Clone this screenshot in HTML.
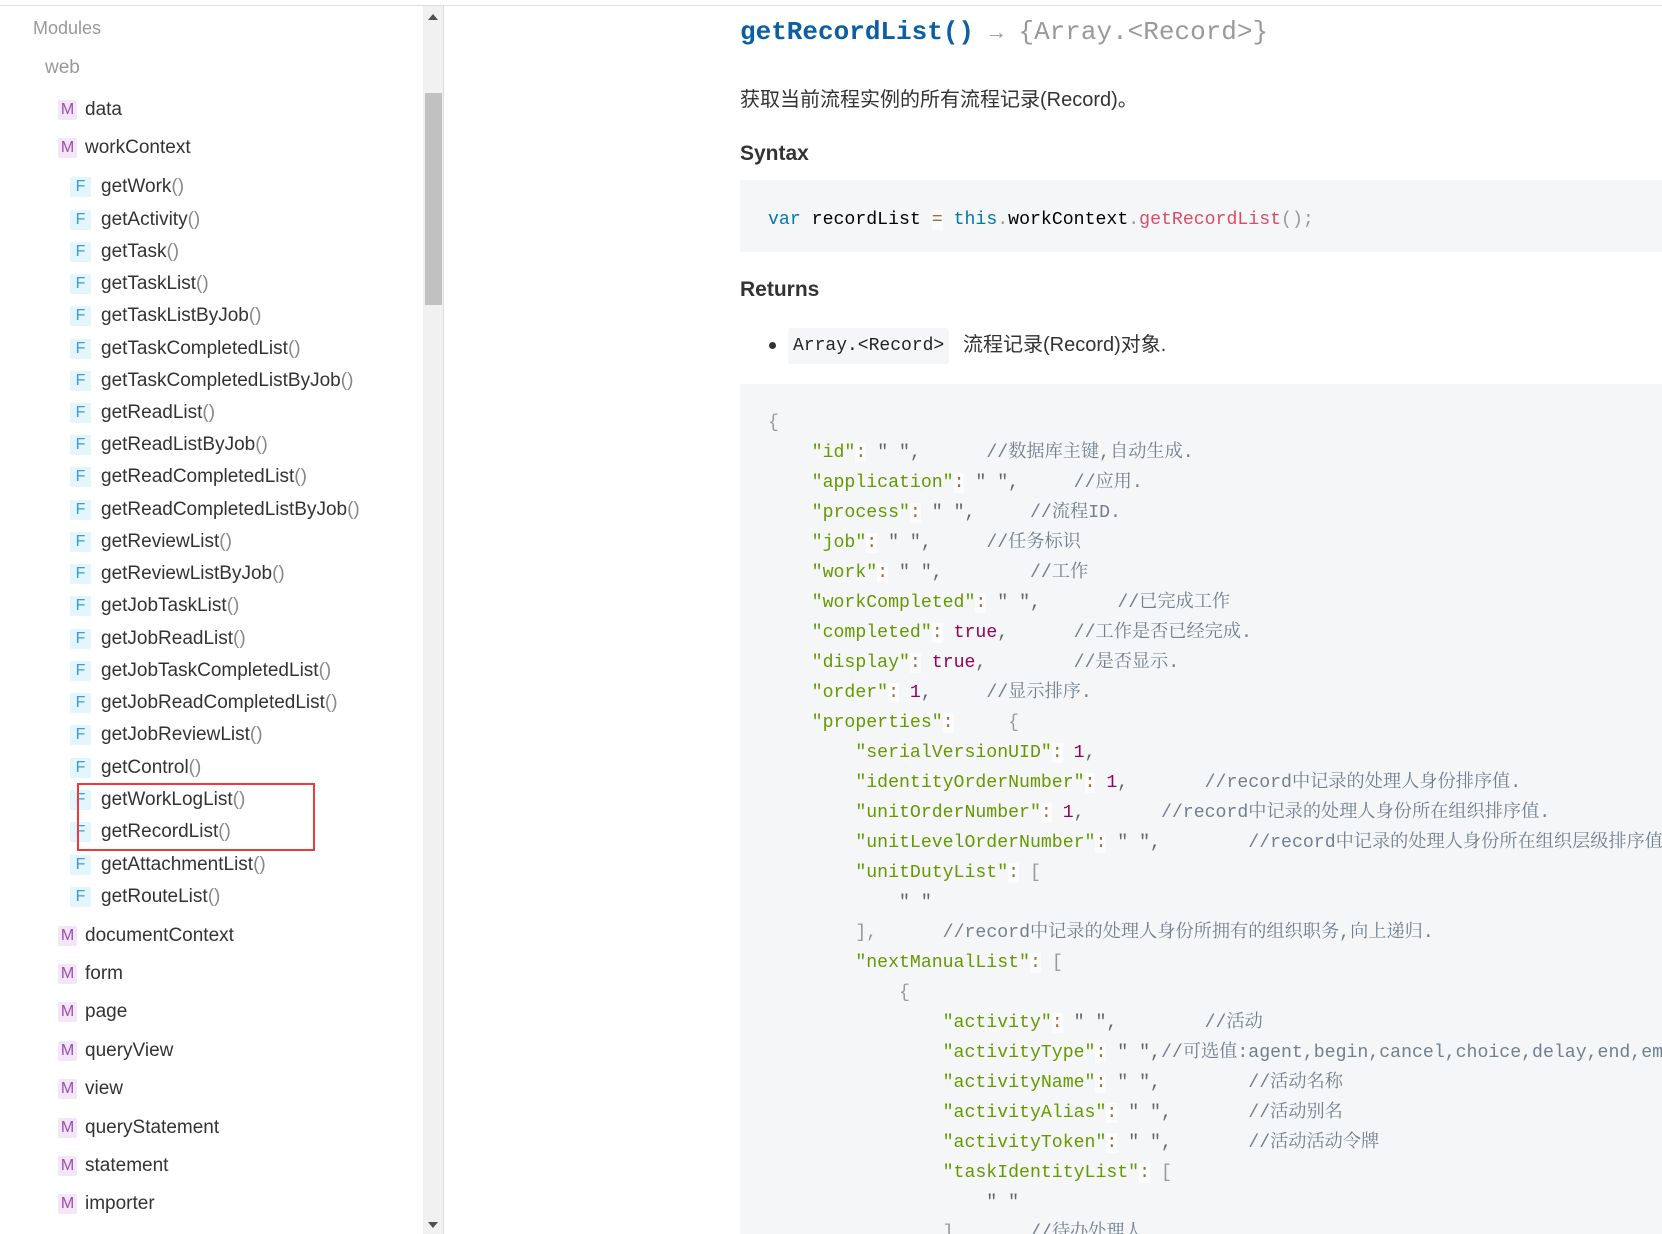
<!DOCTYPE html>
<html><head><meta charset="utf-8">
<style>
*{margin:0;padding:0;box-sizing:border-box}
html,body{width:1662px;height:1234px;overflow:hidden;background:#fff;font-family:"Liberation Sans","Noto Sans CJK SC",sans-serif}
.topline{position:absolute;left:0;top:5px;width:1662px;height:1px;background:#ddd}
.side{position:absolute;left:0;top:8px;width:444px;height:1226px}
.it{position:absolute;height:30px;line-height:30px;font-size:19px;color:#333;white-space:nowrap}
.it .ic{display:inline-block;width:19px;height:20px;line-height:20px;text-align:center;font-size:16px;border-radius:2px;margin-right:8px;vertical-align:1px}
.m .ic{background:#f3e7f7;color:#9b4bb5}
.f .ic{background:#e3f5fd;color:#3d9ccf;width:21px;margin-right:10px}
.it .p{color:#888}
.sb{position:absolute;left:423px;top:6px;width:21px;height:1228px;background:#f1f1f1;border-right:1px solid #ddd}
.thumb{position:absolute;left:425px;top:93px;width:17px;height:212px;background:#c1c1c1}
.red{position:absolute;left:77px;top:783px;width:238px;height:68px;border:2px solid #f03a3a}
.c{position:absolute;left:740px;white-space:nowrap}
.mono{font-family:"Liberation Mono","Noto Sans CJK SC",monospace}
pre{font-family:"Liberation Mono","Noto Serif CJK SC",monospace;font-size:18.2px;line-height:30px;color:#000}
.k{color:#0077aa}.fn{color:#dd4a68}.pu{color:#999}.s{color:#669900}.v{color:#666}.b{color:#990055}.cm{color:#708090}.op{color:#9a6e3a;background:rgba(255,255,255,.7)}
.cma{color:#666}
</style></head><body>
<div class="topline"></div>
<div class="side">
<div class="it" style="left:33px;top:5px;color:#999;font-size:18px">Modules</div>
<div class="it" style="left:45px;top:45px;color:#999">web</div>
<div class="it m" style="left:58px;top:87px"><span class="ic">M</span>data</div>
<div class="it m" style="left:58px;top:125px"><span class="ic">M</span>workContext</div>
<div class="it f" style="left:70px;top:164px"><span class="ic">F</span>getWork<span class="p">()</span></div>
<div class="it f" style="left:70px;top:197px"><span class="ic">F</span>getActivity<span class="p">()</span></div>
<div class="it f" style="left:70px;top:229px"><span class="ic">F</span>getTask<span class="p">()</span></div>
<div class="it f" style="left:70px;top:261px"><span class="ic">F</span>getTaskList<span class="p">()</span></div>
<div class="it f" style="left:70px;top:293px"><span class="ic">F</span>getTaskListByJob<span class="p">()</span></div>
<div class="it f" style="left:70px;top:326px"><span class="ic">F</span>getTaskCompletedList<span class="p">()</span></div>
<div class="it f" style="left:70px;top:358px"><span class="ic">F</span>getTaskCompletedListByJob<span class="p">()</span></div>
<div class="it f" style="left:70px;top:390px"><span class="ic">F</span>getReadList<span class="p">()</span></div>
<div class="it f" style="left:70px;top:422px"><span class="ic">F</span>getReadListByJob<span class="p">()</span></div>
<div class="it f" style="left:70px;top:454px"><span class="ic">F</span>getReadCompletedList<span class="p">()</span></div>
<div class="it f" style="left:70px;top:487px"><span class="ic">F</span>getReadCompletedListByJob<span class="p">()</span></div>
<div class="it f" style="left:70px;top:519px"><span class="ic">F</span>getReviewList<span class="p">()</span></div>
<div class="it f" style="left:70px;top:551px"><span class="ic">F</span>getReviewListByJob<span class="p">()</span></div>
<div class="it f" style="left:70px;top:583px"><span class="ic">F</span>getJobTaskList<span class="p">()</span></div>
<div class="it f" style="left:70px;top:616px"><span class="ic">F</span>getJobReadList<span class="p">()</span></div>
<div class="it f" style="left:70px;top:648px"><span class="ic">F</span>getJobTaskCompletedList<span class="p">()</span></div>
<div class="it f" style="left:70px;top:680px"><span class="ic">F</span>getJobReadCompletedList<span class="p">()</span></div>
<div class="it f" style="left:70px;top:712px"><span class="ic">F</span>getJobReviewList<span class="p">()</span></div>
<div class="it f" style="left:70px;top:745px"><span class="ic">F</span>getControl<span class="p">()</span></div>
<div class="it f" style="left:70px;top:777px"><span class="ic">F</span>getWorkLogList<span class="p">()</span></div>
<div class="it f" style="left:70px;top:809px"><span class="ic">F</span>getRecordList<span class="p">()</span></div>
<div class="it f" style="left:70px;top:842px"><span class="ic">F</span>getAttachmentList<span class="p">()</span></div>
<div class="it f" style="left:70px;top:874px"><span class="ic">F</span>getRouteList<span class="p">()</span></div>
<div class="it m" style="left:58px;top:913px"><span class="ic">M</span>documentContext</div>
<div class="it m" style="left:58px;top:951px"><span class="ic">M</span>form</div>
<div class="it m" style="left:58px;top:989px"><span class="ic">M</span>page</div>
<div class="it m" style="left:58px;top:1028px"><span class="ic">M</span>queryView</div>
<div class="it m" style="left:58px;top:1066px"><span class="ic">M</span>view</div>
<div class="it m" style="left:58px;top:1105px"><span class="ic">M</span>queryStatement</div>
<div class="it m" style="left:58px;top:1143px"><span class="ic">M</span>statement</div>
<div class="it m" style="left:58px;top:1181px"><span class="ic">M</span>importer</div>
</div>
<div class="red"></div>
<div class="sb"></div>
<div class="thumb"></div>
<div style="position:absolute;left:428px;top:14px;width:0;height:0;border-left:5px solid transparent;border-right:5px solid transparent;border-bottom:6px solid #505050"></div>
<div style="position:absolute;left:428px;top:1222px;width:0;height:0;border-left:5px solid transparent;border-right:5px solid transparent;border-top:6px solid #505050"></div>

<div class="c mono" style="top:12px;font-size:26px;line-height:40px"><b style="color:#0b5fa5">getRecordList()</b> <span style="color:#999;font-size:22px">→</span> <span style="color:#999">{Array.&lt;Record&gt;}</span></div>
<div class="c" style="top:86px;font-size:20px;line-height:28px;color:#333">获取当前流程实例的所有流程记录(Record)。</div>
<div class="c" style="top:140px;font-size:21px;line-height:28px;color:#333;font-weight:bold">Syntax</div>
<div class="c" style="top:180px;width:922px;height:72px;background:#f5f6f8"><pre style="padding:25px 0 0 28px"><span class="k">var</span> recordList <span class="op">=</span> <span class="k">this</span><span class="pu">.</span>workContext<span class="pu">.</span><span class="fn">getRecordList</span><span class="pu">();</span></pre></div>
<div class="c" style="top:276px;font-size:21px;line-height:28px;color:#333;font-weight:bold">Returns</div>
<div style="position:absolute;left:769px;top:342px;width:7px;height:7px;border-radius:50%;background:#333"></div>
<div class="mono" style="position:absolute;left:788px;top:328px;height:36px;line-height:36px;padding:0 5px;background:#f5f6f8;font-size:18px;color:#222;border-radius:3px">Array.&lt;Record&gt;</div>
<div style="position:absolute;left:963px;top:331px;font-size:20px;line-height:28px;color:#333">流程记录(Record)对象.</div>

<div class="c" style="top:384px;width:922px;height:850px;background:#f5f6f8;overflow:hidden"><pre style="padding:24px 0 0 28px"><span class="pu">{</span>
    <span class="s">"id"</span><span class="op">:</span> <span class="v">" "</span><span class="cma">,</span>      <span class="cm">//数据库主键,自动生成.</span>
    <span class="s">"application"</span><span class="op">:</span> <span class="v">" "</span><span class="cma">,</span>     <span class="cm">//应用.</span>
    <span class="s">"process"</span><span class="op">:</span> <span class="v">" "</span><span class="cma">,</span>     <span class="cm">//流程ID.</span>
    <span class="s">"job"</span><span class="op">:</span> <span class="v">" "</span><span class="cma">,</span>     <span class="cm">//任务标识</span>
    <span class="s">"work"</span><span class="op">:</span> <span class="v">" "</span><span class="cma">,</span>        <span class="cm">//工作</span>
    <span class="s">"workCompleted"</span><span class="op">:</span> <span class="v">" "</span><span class="cma">,</span>       <span class="cm">//已完成工作</span>
    <span class="s">"completed"</span><span class="op">:</span> <span class="b">true</span><span class="cma">,</span>      <span class="cm">//工作是否已经完成.</span>
    <span class="s">"display"</span><span class="op">:</span> <span class="b">true</span><span class="cma">,</span>        <span class="cm">//是否显示.</span>
    <span class="s">"order"</span><span class="op">:</span> <span class="b">1</span><span class="cma">,</span>     <span class="cm">//显示排序.</span>
    <span class="s">"properties"</span><span class="op">:</span>     <span class="pu">{</span>
        <span class="s">"serialVersionUID"</span><span class="op">:</span> <span class="b">1</span><span class="cma">,</span>
        <span class="s">"identityOrderNumber"</span><span class="op">:</span> <span class="b">1</span><span class="cma">,</span>       <span class="cm">//record中记录的处理人身份排序值.</span>
        <span class="s">"unitOrderNumber"</span><span class="op">:</span> <span class="b">1</span><span class="cma">,</span>       <span class="cm">//record中记录的处理人身份所在组织排序值.</span>
        <span class="s">"unitLevelOrderNumber"</span><span class="op">:</span> <span class="v">" "</span><span class="cma">,</span>        <span class="cm">//record中记录的处理人身份所在组织层级排序值.</span>
        <span class="s">"unitDutyList"</span><span class="op">:</span> <span class="pu">[</span>
            <span class="v">" "</span>
        <span class="pu">],</span>      <span class="cm">//record中记录的处理人身份所拥有的组织职务,向上递归.</span>
        <span class="s">"nextManualList"</span><span class="op">:</span> <span class="pu">[</span>
            <span class="pu">{</span>
                <span class="s">"activity"</span><span class="op">:</span> <span class="v">" "</span><span class="cma">,</span>        <span class="cm">//活动</span>
                <span class="s">"activityType"</span><span class="op">:</span> <span class="v">" "</span><span class="cma">,</span><span class="cm">//可选值:agent,begin,cancel,choice,delay,end,embed</span>
                <span class="s">"activityName"</span><span class="op">:</span> <span class="v">" "</span><span class="cma">,</span>        <span class="cm">//活动名称</span>
                <span class="s">"activityAlias"</span><span class="op">:</span> <span class="v">" "</span><span class="cma">,</span>       <span class="cm">//活动别名</span>
                <span class="s">"activityToken"</span><span class="op">:</span> <span class="v">" "</span><span class="cma">,</span>       <span class="cm">//活动活动令牌</span>
                <span class="s">"taskIdentityList"</span><span class="op">:</span> <span class="pu">[</span>
                    <span class="v">" "</span>
                <span class="pu">],</span>      <span class="cm">//待办处理人</span>
</pre></div>
</body></html>
